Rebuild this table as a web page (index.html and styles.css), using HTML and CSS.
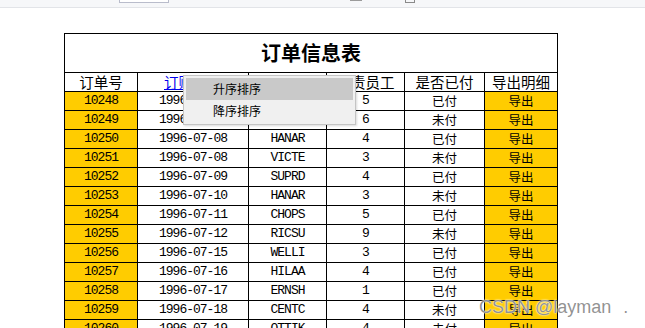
FILE: index.html
```html
<!DOCTYPE html>
<html lang="zh">
<head>
<meta charset="utf-8">
<title>订单信息表</title>
<link rel="stylesheet" href="styles.css">
</head>
<body>
<div class="topbar">
  <span class="tb-input"></span>
  <span class="tb-bar"></span>
  <span class="tb-icon"></span>
</div>
<main class="page">
  <table class="orders">
    <colgroup>
      <col class="c1"><col class="c2"><col class="c3"><col class="c4"><col class="c5"><col class="c6">
    </colgroup>
    <thead>
      <tr class="title-row"><th colspan="6">订单信息表</th></tr>
      <tr class="head-row">
        <th>订单号</th>
        <th><a href="#" class="sort-link">订购日期</a></th>
        <th>客户编号</th>
        <th>负责员工</th>
        <th>是否已付</th>
        <th>导出明细</th>
      </tr>
    </thead>
    <tbody>
      <tr><td class="id">10248</td><td>1996-07-04</td><td>VINET</td><td>5</td><td class="cn">已付</td><td class="exp">导出</td></tr>
      <tr><td class="id">10249</td><td>1996-07-05</td><td>TOMSP</td><td>6</td><td class="cn">未付</td><td class="exp">导出</td></tr>
      <tr><td class="id">10250</td><td>1996-07-08</td><td>HANAR</td><td>4</td><td class="cn">已付</td><td class="exp">导出</td></tr>
      <tr><td class="id">10251</td><td>1996-07-08</td><td>VICTE</td><td>3</td><td class="cn">未付</td><td class="exp">导出</td></tr>
      <tr><td class="id">10252</td><td>1996-07-09</td><td>SUPRD</td><td>4</td><td class="cn">已付</td><td class="exp">导出</td></tr>
      <tr><td class="id">10253</td><td>1996-07-10</td><td>HANAR</td><td>3</td><td class="cn">未付</td><td class="exp">导出</td></tr>
      <tr><td class="id">10254</td><td>1996-07-11</td><td>CHOPS</td><td>5</td><td class="cn">已付</td><td class="exp">导出</td></tr>
      <tr><td class="id">10255</td><td>1996-07-12</td><td>RICSU</td><td>9</td><td class="cn">未付</td><td class="exp">导出</td></tr>
      <tr><td class="id">10256</td><td>1996-07-15</td><td>WELLI</td><td>3</td><td class="cn">已付</td><td class="exp">导出</td></tr>
      <tr><td class="id">10257</td><td>1996-07-16</td><td>HILAA</td><td>4</td><td class="cn">已付</td><td class="exp">导出</td></tr>
      <tr><td class="id">10258</td><td>1996-07-17</td><td>ERNSH</td><td>1</td><td class="cn">已付</td><td class="exp">导出</td></tr>
      <tr><td class="id">10259</td><td>1996-07-18</td><td>CENTC</td><td>4</td><td class="cn">未付</td><td class="exp">导出</td></tr>
      <tr><td class="id">10260</td><td>1996-07-19</td><td>OTTIK</td><td>4</td><td class="cn">未付</td><td class="exp">导出</td></tr>
    </tbody>
  </table>
</main>
<ul class="context-menu">
  <li class="menu-item active">升序排序</li>
  <li class="menu-item">降序排序</li>
</ul>
<div class="watermark">CSDN @layman<span class="wm-dot">.</span></div>
</body>
</html>
```

FILE: styles.css
```css
html, body {
  margin: 0;
  padding: 0;
  background: #ffffff;
}

body {
  position: relative;
  font-family: "Noto Sans CJK SC", sans-serif;
  overflow: hidden;
  height: 328px;
}

.topbar {
  height: 7px;
  background: #f6f7f9;
  border-bottom: 1px solid #e2e4e8;
  display: flex;
  align-items: flex-start;
}

.tb-input {
  margin-left: 119px;
  width: 48px;
  height: 2px;
  background: #ffffff;
  border: 1px solid #b9bccb;
  border-top: none;
}

.tb-bar {
  margin-left: 181px;
  width: 12px;
  height: 1px;
  background: #9b9b9b;
}

.tb-icon {
  margin-left: 43px;
  width: 8px;
  height: 2px;
  border: 1px solid #8a8a8a;
  border-top: none;
}

.page {
  padding: 25px 0 0 64px;
}

.orders {
  border-collapse: collapse;
  table-layout: fixed;
  width: 493px;
  color: #000;
}

.c1 { width: 73px; }
.c2 { width: 111px; }
.c3 { width: 78px; }
.c4 { width: 78px; }
.c5 { width: 80px; }
.c6 { width: 73px; }

.orders th,
.orders td {
  border: 1px solid #000;
  padding: 0;
  text-align: center;
  vertical-align: middle;
  white-space: nowrap;
  overflow: hidden;
}

.title-row th {
  height: 38px;
  font-family: "Noto Sans CJK SC", serif;
  font-weight: 700;
  font-size: 20px;
  line-height: 24px;
}

.head-row th {
  height: 18px;
  font-weight: 400;
  font-size: 14.5px;
  line-height: 18px;
}

.sort-link {
  color: #0000ee;
  text-decoration: underline;
}

.orders tbody tr {
  height: 19px;
}

.orders td {
  height: 18px;
  font-family: "Liberation Mono", "Noto Sans CJK SC", monospace;
  font-size: 13px;
  letter-spacing: -1px;
  line-height: 18px;
}

.orders td.id {
  background: #ffcc00;
}

.orders td.cn,
.orders td.exp {
  font-family: "Noto Sans CJK SC", sans-serif;
  font-size: 12.5px;
  letter-spacing: 0;
}

.orders td.exp {
  background: #ffcc00;
}

.context-menu {
  position: absolute;
  left: 183px;
  top: 75px;
  width: 167px;
  margin: 0;
  padding: 2px;
  list-style: none;
  background: #f0f0f0;
  border: 1px solid #c4c4c4;
  box-shadow: 1px 1px 2px rgba(0, 0, 0, 0.15);
}

.menu-item {
  height: 22px;
  line-height: 22px;
  padding-left: 27px;
  font-size: 12px;
  color: #000;
}

.menu-item.active {
  background: #c9c9c9;
}

.watermark {
  position: absolute;
  left: 479px;
  top: 297px;
  font-family: "Liberation Sans", Arial, sans-serif;
  font-size: 18px;
  line-height: 20px;
  color: rgba(110, 110, 110, 0.75);
  text-shadow: 0 0 2px #ffffff, 0 0 1px #ffffff;
  white-space: nowrap;
}

.wm-dot {
  margin-left: 12px;
}
```
